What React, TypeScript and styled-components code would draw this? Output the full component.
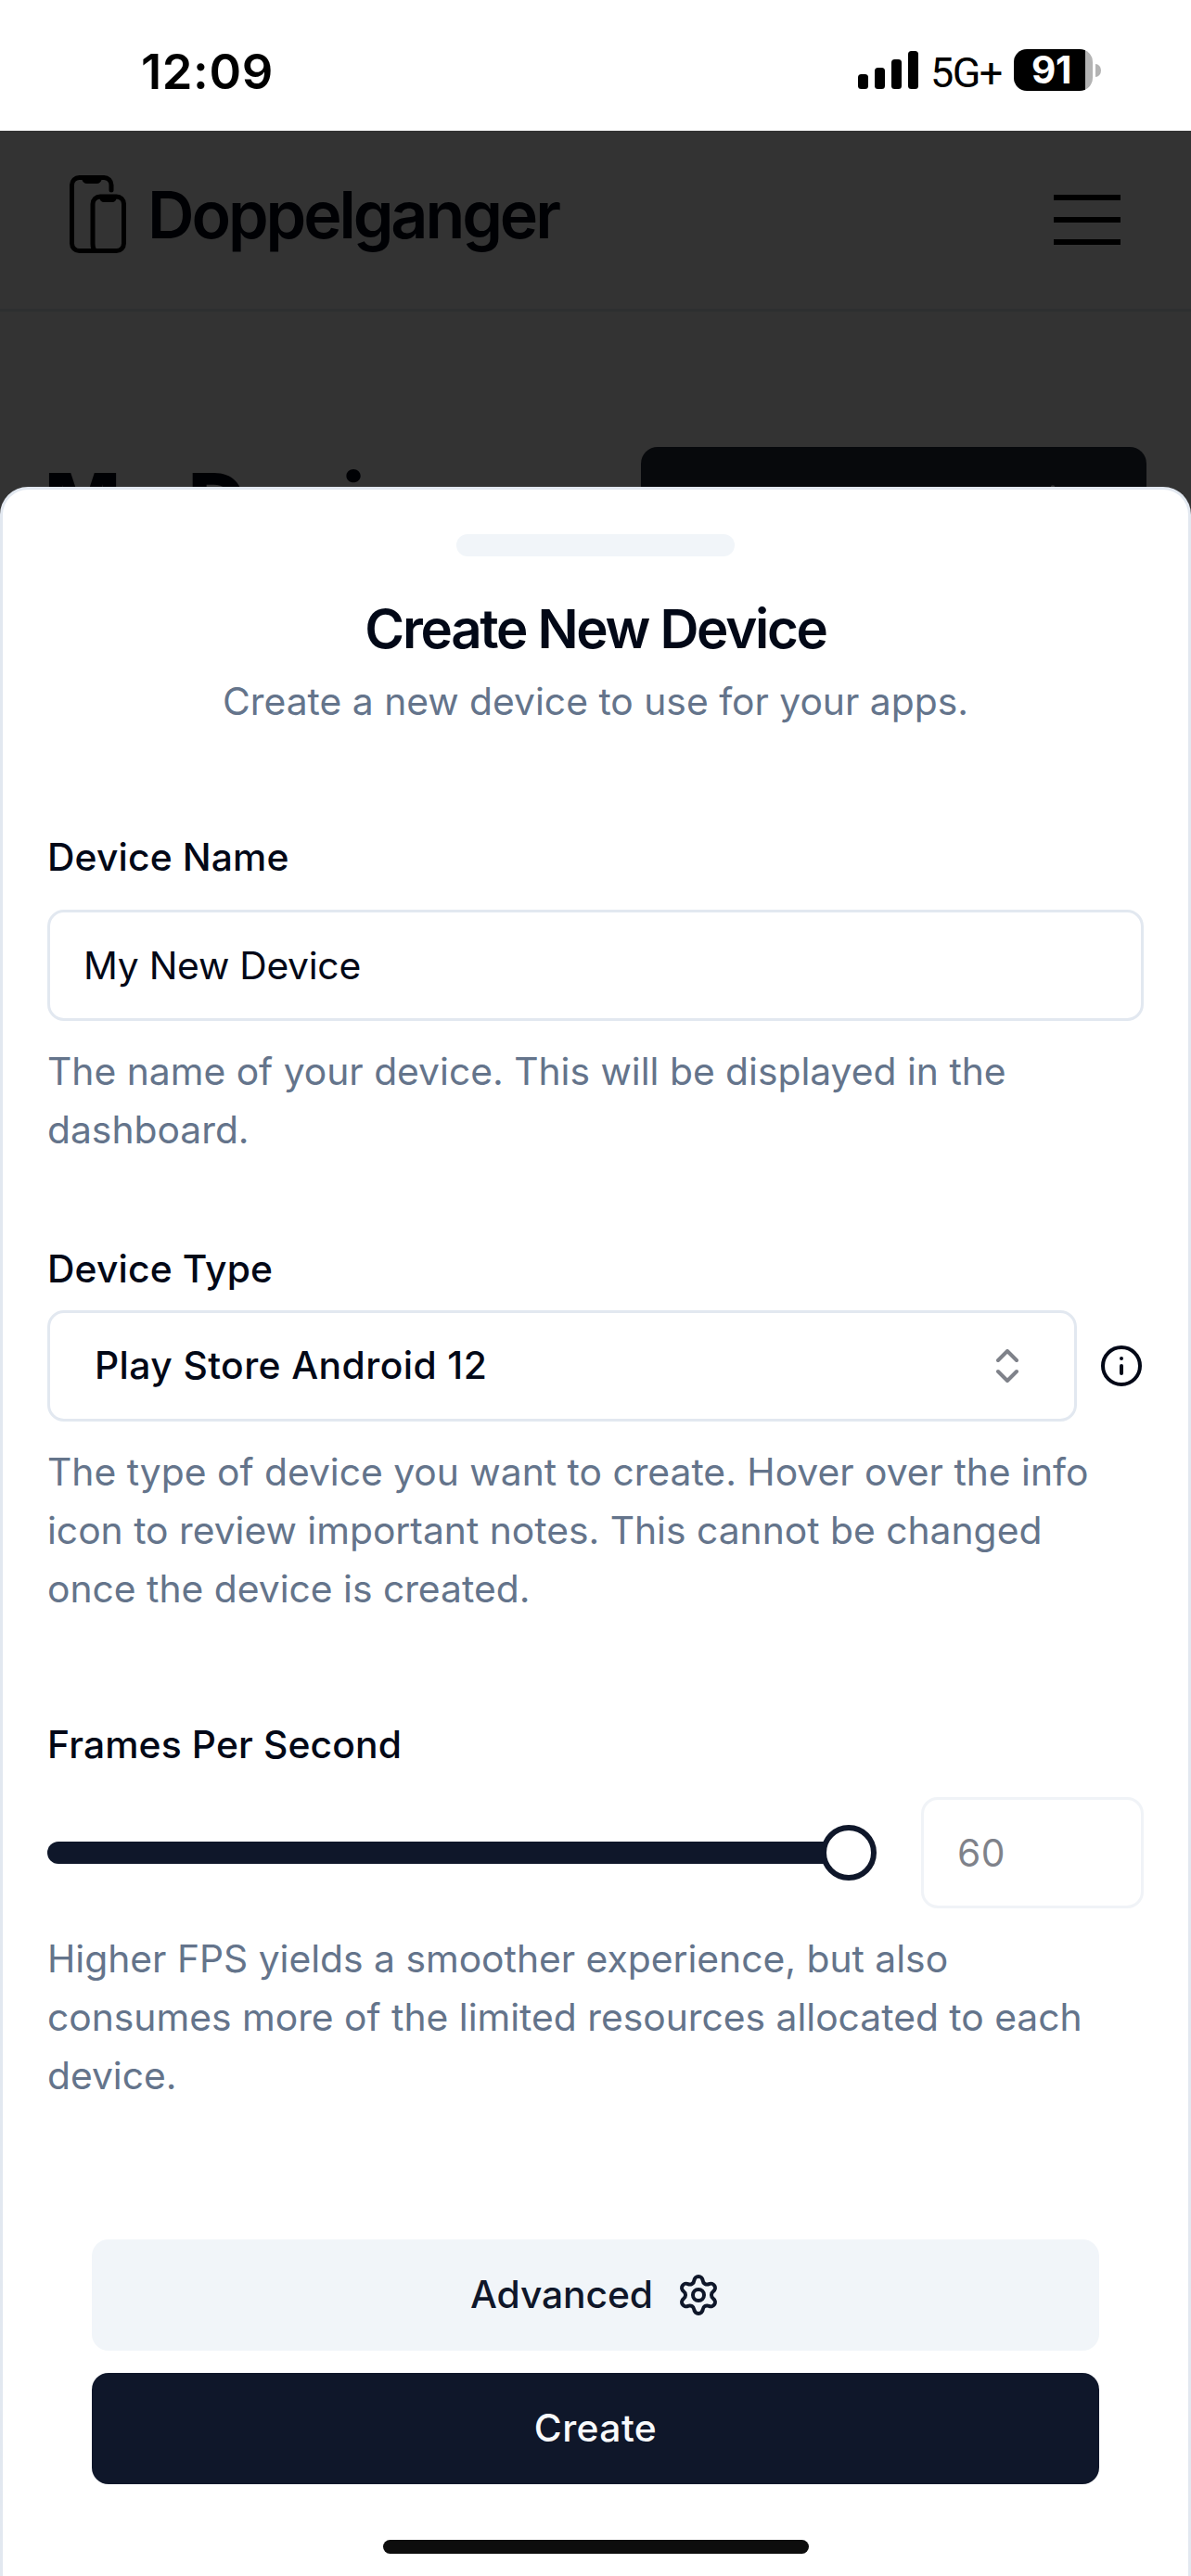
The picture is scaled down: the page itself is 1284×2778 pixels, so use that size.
import React from "react";
import styled, { createGlobalStyle } from "styled-components";
import { ChevronsUpDown, Info, Plus, Settings } from "lucide-react";

const colors = {
  ink: "#020817",
  primary: "#0f172a",
  muted: "#64748b",
  border: "#e2e8f0",
  soft: "#f1f5f9",
};

const GlobalStyle = createGlobalStyle`
  * { box-sizing: border-box; }
  body { margin: 0; background: #fff; }
  button, input { font-family: inherit; margin: 0; }
  h1, h2, p { margin: 0; }
`;

const Screen = styled.div`
  position: relative;
  display: flex;
  flex-direction: column;
  width: 1284px;
  height: 2778px;
  overflow: hidden;
  background: #fff;
  color: ${colors.ink};
  font-family: Inter, "Liberation Sans", sans-serif;
  font-size: 40.8px;
`;

const StatusBar = styled.div`
  display: flex;
  justify-content: space-between;
  height: 141px;
  padding: 53px 97px 0 152px;
  color: #000;
`;

const Clock = styled.span`
  margin-top: -7px;
  font-size: 52.5px;
  font-weight: 600;
  line-height: 62px;
  letter-spacing: 0.6px;
`;

const StatusIcons = styled.div`
  display: flex;
  height: 45px;
`;

const Signal = styled.div`
  display: flex;
  align-items: flex-end;
  gap: 7px;
  height: 43px;
`;

const SignalBar = styled.span<{ $height: number }>`
  width: 11px;
  height: ${(p) => p.$height}px;
  border-radius: 3.5px;
  background: #000;
`;

const Network = styled.span`
  width: 103px;
  padding: 1px 0 0 13px;
  font-family: Roboto, sans-serif;
  font-size: 45px;
  line-height: 50px;
  letter-spacing: -1.6px;
`;

const Battery = styled.div`
  display: flex;
  align-items: center;
  gap: 3px;
  height: 45px;
`;

const BatteryBody = styled.div`
  width: 85px;
  height: 45px;
  border-radius: 14px;
  padding-right: 4px;
  background: linear-gradient(90deg, #000 77px, #b3b3b3 77px);
  color: #fff;
  font-size: 40.5px;
  font-weight: 700;
  line-height: 45px;
  text-align: center;
  letter-spacing: -0.5px;
`;

const BatteryTip = styled.span`
  width: 6px;
  height: 14px;
  border-radius: 0 6px 6px 0 / 0 7px 7px 0;
  background: #b3b3b3;
`;

const Page = styled.div`
  position: relative;
  flex: 1;
`;

const NavBar = styled.header`
  display: flex;
  align-items: center;
  justify-content: space-between;
  height: 195px;
  padding: 0 76px 0 75px;
  border-bottom: 3px solid ${colors.border};
`;

const Brand = styled.div`
  display: flex;
  align-items: center;
  gap: 23px;
  margin-top: -13px;
  font-size: 70px;
  font-weight: 600;
  letter-spacing: -3.1px;
  line-height: 84px;
`;

const BrandName = styled.span`
  padding-top: 2px;
`;

const MenuButton = styled.div`
  display: flex;
  flex-direction: column;
  gap: 18px;
`;

const MenuLine = styled.span`
  width: 72px;
  height: 6px;
  background: #000;
`;

const PageHeading = styled.div`
  display: flex;
  align-items: center;
  justify-content: space-between;
  padding: 146px 48px 0;
`;

const PageTitle = styled.h1`
  margin-top: -1px;
  font-size: 87px;
  font-weight: 800;
  line-height: 108px;
  letter-spacing: -0.4px;
`;

const NewDeviceButton = styled.div`
  display: flex;
  align-items: center;
  justify-content: flex-end;
  width: 545px;
  height: 120px;
  padding-right: 73px;
  border-radius: 18px;
  background: rgba(15, 23, 42, 0.9);
  color: #f8fafc;
`;

const Scrim = styled.div`
  position: absolute;
  inset: 0;
  background: rgba(0, 0, 0, 0.8);
`;

const Sheet = styled.section`
  position: absolute;
  inset: 384px 0 0 0;
  display: flex;
  flex-direction: column;
  padding: 48px 48px 24px;
  border: 3px solid ${colors.border};
  border-bottom: 0;
  border-radius: 30px 30px 0 0;
  background: #fff;
`;

const Handle = styled.div`
  align-self: center;
  width: 300px;
  height: 24px;
  border-radius: 12px;
  background: ${colors.soft};
`;

const SheetHeader = styled.div`
  display: flex;
  flex-direction: column;
  align-items: center;
  gap: 17px;
  margin-top: 48px;
`;

const SheetTitle = styled.h2`
  font-size: 58.2px;
  font-weight: 600;
  line-height: 60px;
  letter-spacing: -2.3px;
`;

const Hint = styled.p`
  color: ${colors.muted};
  line-height: 63px;
  letter-spacing: -0.01px;
`;

const FieldHint = styled(Hint)`
  max-width: 1140px;
  margin-top: 23px;
`;

const Field = styled.div<{ $top: number }>`
  display: flex;
  flex-direction: column;
  margin-top: ${(p) => p.$top}px;
`;

const Label = styled.label<{ $gap: number }>`
  margin-bottom: ${(p) => p.$gap}px;
  font-weight: 500;
  line-height: 42px;
  letter-spacing: 0.15px;
`;

const ControlRow = styled.div<{ $gap: number }>`
  display: flex;
  align-items: center;
  gap: ${(p) => p.$gap}px;
`;

const TextInput = styled.input<{ $width?: string }>`
  width: ${(p) => p.$width ?? "100%"};
  height: 120px;
  padding: 0 36px;
  border: 3px solid ${colors.border};
  border-radius: 18px;
  background: #fff;
  color: ${colors.ink};
  font-size: 40.8px;
  letter-spacing: -0.27px;
  &:disabled {
    opacity: 0.5;
    letter-spacing: 0.4px;
  }
`;

const SelectBox = styled.button`
  display: flex;
  flex: 1;
  align-items: center;
  justify-content: space-between;
  height: 120px;
  padding: 0 48px;
  border: 3px solid ${colors.border};
  border-radius: 18px;
  background: #fff;
  color: ${colors.ink};
  font-size: 40.8px;
  font-weight: 500;
  letter-spacing: 0.42px;
  svg {
    opacity: 0.5;
  }
`;

const ButtonText = styled.span`
  padding-bottom: 2px;
`;

const Slider = styled.div`
  display: flex;
  flex: 1;
  align-items: center;
  height: 60px;
`;

const SliderRange = styled.div`
  flex: 1;
  height: 24px;
  margin-right: -10px;
  border-radius: 12px 0 0 12px;
  background: ${colors.primary};
`;

const SliderThumb = styled.div`
  width: 60px;
  height: 60px;
  border: 6px solid ${colors.primary};
  border-radius: 50%;
  background: #fff;
`;

const Actions = styled.div`
  display: flex;
  flex-direction: column;
  gap: 24px;
  margin-top: 145px;
  padding: 0 48px;
`;

const ActionButton = styled.button<{ $primary?: boolean }>`
  display: flex;
  align-items: center;
  justify-content: center;
  gap: 25px;
  height: 120px;
  border: 0;
  border-radius: 18px;
  background: ${(p) => (p.$primary ? colors.primary : colors.soft)};
  color: ${(p) => (p.$primary ? "#f8fafc" : colors.primary)};
  font-size: 40.8px;
  font-weight: 500;
  letter-spacing: ${(p) => (p.$primary ? "0.4px" : "-0.1px")};
`;

const HomeIndicator = styled.div`
  align-self: center;
  width: 459px;
  height: 15px;
  margin-top: auto;
  border-radius: 8px;
  background: #0d0d0d;
`;

const PhonesLogo = () => (
  <svg width="61" height="84" viewBox="0 0 61 84" fill="none" stroke="#000" strokeWidth="5">
    <path
      d="M45 16 V10.5 a8 8 0 0 0 -8 -8 H10.5 a8 8 0 0 0 -8 8 V73.5 a8 8 0 0 0 8 8 H50.5 a8 8 0 0 0 8 -8 V31 a8 8 0 0 0 -8 -8 H33 a8 8 0 0 0 -8 8 V74 q0 5 2 7"
      strokeLinecap="round"
    />
    <path d="M13 3 q1 6 6 6 h10 q5 0 6 -6 z M32 24 q1 5 5 5 h9 q4 0 5 -5 z" fill="#000" stroke="none" />
  </svg>
);

export default function App() {
  return (
    <Screen>
      <GlobalStyle />
      <StatusBar>
        <Clock>12:09</Clock>
        <StatusIcons>
          <Signal>
            {[16, 23, 32, 41].map((h) => (
              <SignalBar key={h} $height={h} />
            ))}
          </Signal>
          <Network>5G+</Network>
          <Battery>
            <BatteryBody>91</BatteryBody>
            <BatteryTip />
          </Battery>
        </StatusIcons>
      </StatusBar>
      <Page>
        <NavBar>
          <Brand>
            <PhonesLogo />
            <BrandName>Doppelganger</BrandName>
          </Brand>
          <MenuButton>
            <MenuLine />
            <MenuLine />
            <MenuLine />
          </MenuButton>
        </NavBar>
        <PageHeading>
          <PageTitle>My Devices</PageTitle>
          <NewDeviceButton>
            <Plus size={56} />
          </NewDeviceButton>
        </PageHeading>
        <Scrim />
        <Sheet>
          <Handle />
          <SheetHeader>
            <SheetTitle>Create New Device</SheetTitle>
            <Hint>Create a new device to use for your apps.</Hint>
          </SheetHeader>
          <Field $top={115}>
            <Label $gap={36}>Device Name</Label>
            <TextInput defaultValue="My New Device" />
            <FieldHint>
              The name of your device. This will be displayed in the dashboard.
            </FieldHint>
          </Field>
          <Field $top={97}>
            <Label $gap={24}>Device Type</Label>
            <ControlRow $gap={24}>
              <SelectBox>
                <ButtonText>Play Store Android 12</ButtonText>
                <ChevronsUpDown size={48} />
              </SelectBox>
              <Info size={48} />
            </ControlRow>
            <FieldHint>
              The type of device you want to create. Hover over the info icon to review important
              notes. This cannot be changed once the device is created.
            </FieldHint>
          </Field>
          <Field $top={115}>
            <Label $gap={36}>Frames Per Second</Label>
            <ControlRow $gap={48}>
              <Slider>
                <SliderRange />
                <SliderThumb />
              </Slider>
              <TextInput $width="240px" defaultValue="60" disabled />
            </ControlRow>
            <FieldHint>
              Higher FPS yields a smoother experience, but also consumes more of the limited
              resources allocated to each device.
            </FieldHint>
          </Field>
          <Actions>
            <ActionButton>
              <ButtonText>Advanced</ButtonText>
              <Settings size={48} />
            </ActionButton>
            <ActionButton $primary>
              <ButtonText>Create</ButtonText>
            </ActionButton>
          </Actions>
          <HomeIndicator />
        </Sheet>
      </Page>
    </Screen>
  );
}
